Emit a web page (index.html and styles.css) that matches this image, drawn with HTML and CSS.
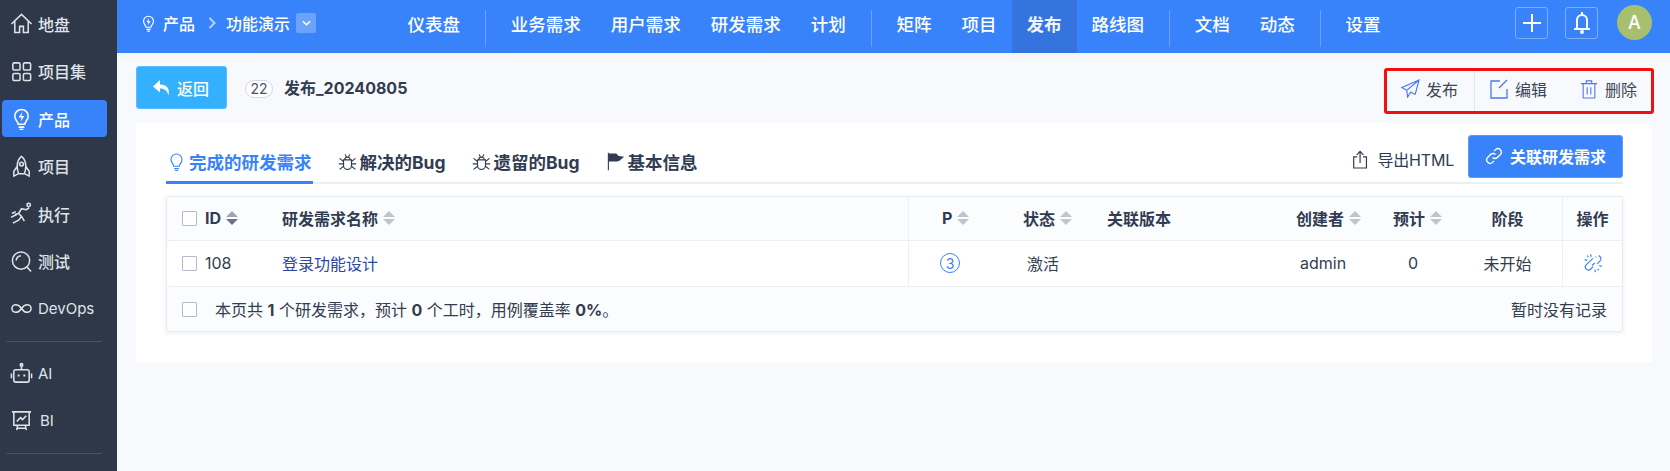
FILE: index.html
```html
<!DOCTYPE html>
<html lang="zh-CN">
<head>
<meta charset="utf-8">
<title>发布详情</title>
<link rel="stylesheet" href="styles.css">
</head>
<body>
<div class="app">
  <aside class="sidebar">
    <a class="side-item"><svg class="side-icon" viewBox="0 0 24 24"><path d="M1.500 12.500 12 2.500l10.500 10M5 10v11.500h5v-6.500h4v6.500h5V10"/></svg><span>地盘</span></a>
    <a class="side-item"><svg class="side-icon" viewBox="0 0 24 24"><rect x="3" y="3" width="7.500" height="7.500" rx="1.500"/><rect x="14" y="3" width="7.500" height="7.500" rx="1.500"/><rect x="3" y="14" width="7.500" height="7.500" rx="1.500"/><rect x="14" y="14" width="7.500" height="7.500" rx="1.500"/></svg><span>项目集</span></a>
    <a class="side-item active"><svg class="side-icon" viewBox="0 0 24 24"><path d="M8.500 18c0-3-3.500-4-3.500-8.500a7 7 0 0 1 14 0C19 14 15.500 15 15.500 18zM9 21h6M10 23.500h4"/><path class="fill" d="M13 5l-4 6h3l-1 4.500 4-6h-3z"/></svg><span>产品</span></a>
    <a class="side-item"><svg class="side-icon" viewBox="0 0 24 24"><path d="M12 1.500c3.500 3 4.500 6.500 4.500 10 0 3-.5 5.500-1.500 8H9c-1-2.500-1.500-5-1.500-8 0-3.500 1-7 4.500-10zM7.500 12 4 17v5l5-2.500M16.500 12l3.500 5v5l-5-2.500"/><circle cx="12" cy="9.500" r="2"/></svg><span>项目</span></a>
    <a class="side-item"><svg class="side-icon" viewBox="0 0 24 24"><path d="M3 22l6-3 3-4-3-3 3-5 5 1 3-2M9 12l-4 1M12 15l3 5"/><circle cx="19.500" cy="3" r="1.800"/><path d="M1 16l6-3M2 12l4-2"/></svg><span>执行</span></a>
    <a class="side-item"><svg class="side-icon" viewBox="0 0 24 24"><circle cx="11.500" cy="11" r="9"/><path d="M17.500 17.500l4.500 5M6.500 11a5 5 0 0 1 5-5"/></svg><span>测试</span></a>
    <a class="side-item latin"><svg class="side-icon" viewBox="0 0 24 24"><path d="M12 12c-2-3-4-4-6-4a4 4 0 0 0 0 8c2 0 4-1 6-4s4-4 6-4a4 4 0 0 1 0 8c-2 0-4-1-6-4z"/></svg><span>DevOps</span></a>
    <div class="side-line"></div>
    <a class="side-item latin"><svg class="side-icon" viewBox="0 0 24 24"><rect x="4" y="8" width="16" height="13" rx="2"/><path d="M12 8V4M1.500 12v5M22.500 12v5"/><circle cx="12" cy="3" r="1.300"/><path class="fill" d="M8 13h2v2H8zM14 13h2v2h-2z"/></svg><span>AI</span></a>
    <a class="side-item latin"><svg class="side-icon" viewBox="0 0 24 24"><path d="M2 3h20M4 3v14h16V3M8 17l-1 5M16 17l1 5M7 20h10M7 13l4-4 2 2 4-4"/></svg><span class="bi">BI</span></a>
    <div class="side-line"></div>
  </aside>
  <div class="content">
    <header class="topbar">
      <div class="crumbs">
        <svg class="crumb-icon" viewBox="0 0 24 24"><path d="M8.500 18c0-3-3.500-4-3.500-8.500a7 7 0 0 1 14 0C19 14 15.500 15 15.500 18zM9 21h6M10 23.500h4"/><path class="fill" d="M13 5l-4 6h3l-1 4.500 4-6h-3z"/></svg>
        <span>产品</span>
        <svg class="crumb-arrow" viewBox="0 0 8 12"><path d="M1.500 1 6.500 6l-5 5"/></svg>
        <span>功能演示</span>
        <span class="crumb-drop"><svg viewBox="0 0 12 8"><path d="M2 2l4 4 4-4"/></svg></span>
      </div>
      <nav class="nav">
        <a class="nav-item">仪表盘</a><i class="nav-line"></i>
        <a class="nav-item">业务需求</a><a class="nav-item">用户需求</a><a class="nav-item">研发需求</a><a class="nav-item">计划</a><i class="nav-line"></i>
        <a class="nav-item">矩阵</a><a class="nav-item">项目</a><a class="nav-item current">发布</a><a class="nav-item">路线图</a><i class="nav-line"></i>
        <a class="nav-item">文档</a><a class="nav-item">动态</a><i class="nav-line"></i>
        <a class="nav-item">设置</a>
      </nav>
      <div class="top-actions">
        <span class="top-btn"><svg viewBox="0 0 20 20"><path d="M10 1v18M1 10h18"/></svg></span>
        <span class="top-btn"><svg viewBox="0 0 20 24"><path d="M5 18V9a5 5 0 0 1 10 0v9zM2 18h16M10 1v3"/><circle class="fillw" cx="10" cy="21" r="2"/></svg></span>
        <span class="avatar">A</span>
      </div>
    </header>
    <main class="main">
      <div class="page-head">
        <button class="back"><svg viewBox="0 0 18 16"><path class="fillw" d="M7 0 0 6.500 7 12.500V8.500c4 0 7 1.500 8.500 7 1.500-7-1.500-11-8.500-11z"/></svg>返回</button>
        <span class="badge">22</span>
        <strong class="title">发布_20240805</strong>
        <div class="toolbar">
          <a class="tool tool-first"><svg viewBox="0 0 20 20"><path d="M19 1 1 9l5 3zM19 1 6 12l1 7 3-5 5 2z"/></svg>发布</a>
          <a class="tool tool-mid"><svg viewBox="0 0 20 20"><path d="M11 2H2v17h16v-9M18 1l-8 8"/></svg>编辑</a>
          <a class="tool tool-last"><svg viewBox="0 0 20 22"><path d="M1 5h18M7 5V2h6v3M3.500 5v16h13V5M8 9v8M12 9v8"/></svg>删除</a>
        </div>
      </div>
      <section class="panel">
        <div class="tabs">
          <a class="tab on"><svg class="tab-icon" viewBox="0 0 24 24"><path d="M8.500 18c0-3-3.500-4-3.500-8.500a7 7 0 0 1 14 0C19 14 15.500 15 15.500 18zM9 21h6M10 23.500h4"/></svg>完成的研发需求</a>
          <a class="tab"><svg class="tab-icon" viewBox="0 0 24 24"><path d="M7 10h10v7a5 5 0 0 1-10 0zM8.500 10a3.500 3.500 0 0 1 7 0M2 8l5 4M22 8l-5 4M1 15h6M23 15h-6M2 22l5-4M22 22l-5-4M9 3l1.500 3M15 3l-1.500 3"/></svg>解决的Bug</a>
          <a class="tab"><svg class="tab-icon" viewBox="0 0 24 24"><path d="M7 10h10v7a5 5 0 0 1-10 0zM8.500 10a3.500 3.500 0 0 1 7 0M2 8l5 4M22 8l-5 4M1 15h6M23 15h-6M2 22l5-4M22 22l-5-4M9 3l1.500 3M15 3l-1.500 3"/></svg>遗留的Bug</a>
          <a class="tab"><svg class="tab-icon flag" viewBox="0 0 24 24"><path d="M3 1v22"/><path class="filld" d="M3 2h10l3 3 7 1-6 5-3 1H3z"/></svg>基本信息</a>
          <a class="export"><svg viewBox="0 0 20 22"><path d="M6 8H2v13h15V8h-4M9.500 15V2M5.500 5.500 9.500 1.500l4 4"/></svg>导出HTML</a>
          <button class="link-btn"><svg viewBox="0 0 24 24"><path d="M10 14a4.500 4.500 0 0 0 6.500 0l4-4a4.600 4.600 0 0 0-6.500-6.500l-2 2M14 10a4.500 4.500 0 0 0-6.500 0l-4 4a4.600 4.600 0 0 0 6.500 6.500l2-2"/></svg>关联研发需求</button>
        </div>
        <div class="table">
          <div class="row head">
            <div class="cell first"><i class="check"></i>ID<i class="sort dark"></i></div>
            <div class="cell name">研发需求名称<i class="sort"></i></div>
            <div class="cell pri ln">P<i class="sort"></i></div>
            <div class="cell st">状态<i class="sort"></i></div>
            <div class="cell">关联版本</div>
            <div class="cell cr">创建者<i class="sort"></i></div>
            <div class="cell es">预计<i class="sort"></i></div>
            <div class="cell ctr stage">阶段</div>
            <div class="cell ctr rn">操作</div>
          </div>
          <div class="row">
            <div class="cell first"><i class="check"></i>108</div>
            <div class="cell name"><a class="story">登录功能设计</a></div>
            <div class="cell pri2 ln"><span class="pri-dot">3</span></div>
            <div class="cell st2">激活</div>
            <div class="cell"></div>
            <div class="cell cr2">admin</div>
            <div class="cell es2">0</div>
            <div class="cell ctr stage">未开始</div>
            <div class="cell ctr rn"><svg class="unlink" viewBox="0 0 24 24"><path d="M16 4.500l-1 .8M19 3l1.500 1.500a3.500 3.500 0 0 1 0 5L17 13M12 6.500 4 14a3.500 3.500 0 0 0 5 5.500l3-3M14 12l-3 3M9 1.500l.8 3M2 8l3 .8M15 23l-.8-3M22.500 16l-3-.8M5 3l1.500 2M19 21l-1.500-2"/></svg></div>
          </div>
          <div class="foot">
            <i class="check"></i>
            <span class="summary">本页共 <b>1</b> 个研发需求，预计 <b>0</b> 个工时，用例覆盖率 <b>0%</b>。</span>
            <span class="empty">暂时没有记录</span>
          </div>
        </div>
      </section>
    </main>
  </div>
</div>
</body>
</html>
```

FILE: styles.css
```css
* { box-sizing: border-box; }
html, body { margin: 0; height: 100%; overflow: hidden; }
body {
  font-family: Inter, "Noto Sans CJK SC", sans-serif;
  font-size: 16px;
  color: #313c52;
  background: #f7f9fc;
}
i { font-style: normal; }
svg { fill: none; stroke: currentColor; stroke-width: 1.6; flex: none; display: block; }
svg .fill { fill: currentColor; stroke: none; }
svg .fillw { fill: #fff; stroke: none; }
svg .filld { fill: #313c52; stroke: none; }

.app { display: flex; height: 471px; }

/* sidebar */
.sidebar {
  width: 117px;
  flex: none;
  background: #2e3849;
  padding: 0 10px 0 2px;
  color: #dfe3e8;
}
.side-item {
  display: flex;
  align-items: center;
  gap: 5px;
  height: 37px;
  margin-bottom: 10.5px;
  padding-left: 8px;
  border-radius: 4px;
  font-size: 16px;
  font-weight: 500;
}
.side-item:first-child { margin-top: 5px; }
.side-item.latin { font-weight: 400; font-size: 15px; margin-bottom: 9.5px; }
.side-item.active { background: #3883fa; color: #fff; }
.side-icon { width: 23px; height: 23px; stroke-width: 1.6; }
.side-item .bi { margin-left: 2px; }
.side-line { height: 1px; background: #485365; margin: 0 0 13px 5px; width: 95px; }
.side-item.latin:has(+ .side-line) { margin-bottom: 14px; }

/* top bar */
.content { flex: 1; min-width: 0; display: flex; flex-direction: column; }
.topbar {
  display: flex;
  height: 53px;
  flex: none;
  background: #3883fa;
  color: #fff;
}
.crumbs {
  display: flex;
  align-items: center;
  height: 46px;
  padding-left: 23px;
  width: 275px;
  flex: none;
  font-size: 16px;
  font-weight: 500;
}
.crumb-icon { width: 17px; height: 20px; margin-right: 6px; }
.crumb-arrow { width: 8px; height: 12px; margin: 0 10px 0 13px; color: #b6d0fb; stroke-width: 2; }
.crumb-drop {
  width: 20px; height: 20px; margin-left: 6px;
  border-radius: 2px;
  background: #6ba3fb;
  display: flex; align-items: center; justify-content: center;
}
.crumb-drop svg { width: 11px; height: 8px; }
.nav { display: flex; align-items: stretch; height: 53px; margin-left: .5px; }
.nav-item {
  display: flex; align-items: center;
  padding: 0 15px 7px;
  font-size: 17.5px;
  font-weight: 500;
  white-space: nowrap;
}
.nav-item.current { background: #3574de; font-weight: 700; color: #eef3fc; }
.nav-line { width: 1px; height: 37px; margin: 10px 10px 0 9.75px; background: #6aa2fb; }
.top-actions {
  margin-left: auto;
  display: flex; align-items: flex-start;
  padding: 5px 18px 0 0;
  gap: 17px;
}
.top-btn {
  width: 33px; height: 32px; margin-top: 2px;
  border: 1px solid #7eaefb;
  border-radius: 3px;
  display: flex; align-items: center; justify-content: center;
}
.top-btn svg { width: 20px; height: 24px; stroke-width: 2; }
.avatar {
  width: 35px; height: 35px; border-radius: 50%;
  background: #a8bf70;
  color: #fff;
  display: flex; align-items: center; justify-content: center;
  font-size: 18px; font-weight: 500;
  margin-left: 2px;
}

/* main */
.main { flex: 1; padding: 13px 18px 0 19px; background: linear-gradient(#f3f4f6, #f7f9fc 6px); }
.page-head { display: flex; align-items: flex-start; height: 48px; }
.back {
  width: 91px; height: 43px;
  border: 1px solid #58bfff;
  border-radius: 3px;
  background: #33b1ff;
  color: #fff;
  font: 500 16px Inter, "Noto Sans CJK SC", sans-serif;
  display: flex; align-items: center; justify-content: center; gap: 6px;
  padding-right: 7px;
}
.back svg { width: 18px; height: 16px; }
.badge {
  width: 28px; height: 18px; margin: 14px 0 0 18px;
  border: 1px solid #d5d9e4;
  border-radius: 9px;
  background: #fff;
  font-size: 14px; line-height: 16px; text-align: center;
  color: #4a5468;
}
.title { margin: 9px 0 0 11px; font-size: 16px; font-weight: 700; }
.toolbar {
  margin: 2px -2px 0 auto;
  width: 270px; height: 46px;
  border: 3px solid #f01010;
  border-radius: 3px;
  display: flex; align-items: center;
  color: #3c465a;
}
.tool { display: flex; align-items: center; height: 100%; padding-bottom: 5px; }
.tool svg { width: 19px; height: 19px; color: #4a78f0; stroke-width: 1.2; margin-right: 7px; }
.tool-first { padding-left: 14px; width: 88px; border-right: 1px solid #e4e7ee; }
.tool-first svg { margin-right: 6px; }
.tool-mid { padding-left: 14px; width: 90px; }
.tool-mid svg { width: 20px; height: 20px; margin-right: 6px; stroke-width: 1.3; }
.tool-last { padding-left: 15px; }
.tool-last svg { width: 18px; height: 20px; margin-right: 7px; }

.panel { margin-top: 9px; height: 239px; background: #fff; padding: 12px 29px 0 30px; }
.tabs {
  display: flex; align-items: center;
  height: 49px;
  border-bottom: 2px solid #eceff5;
}
.tab {
  display: flex; align-items: center;
  height: 49px;
  margin-bottom: -2px;
  margin-right: 26px;
  padding-top: 7px;
  font-size: 17.5px;
  font-weight: 700;
  border-bottom: 3px solid transparent;
  white-space: nowrap;
}
.tab.on { color: #3883fa; border-bottom-color: #3883fa; margin-right: 25px; padding-left: 1px; padding-right: 1px; }
.tab-icon { width: 19px; height: 19px; margin-right: 3px; stroke-width: 1.4; }
.tab-icon.flag { width: 19px; height: 19px; }
.export { margin-left: auto; display: flex; align-items: center; gap: 8px; white-space: nowrap; margin-top: 1px; letter-spacing: -.2px; }
.export svg { width: 17px; height: 19px; stroke-width: 1.4; }
.link-btn {
  margin: -5px 0 0 14px;
  width: 155px; height: 43px;
  border: 1px solid #5b99fb;
  border-radius: 3px;
  background: #3883fa;
  color: #fff;
  font: 700 16px Inter, "Noto Sans CJK SC", sans-serif;
  display: flex; align-items: center; justify-content: center; gap: 7px;
  flex: none;
}
.link-btn svg { width: 18px; height: 18px; stroke-width: 1.8; }

/* table */
.table {
  margin-top: 12px;
  height: 136px;
  border: 1px solid #e9ecf2;
  border-radius: 3px;
  background: #fbfcfe;
  box-shadow: 0 1px 4px rgba(40, 60, 100, .1);
}
.row {
  display: grid;
  grid-template-columns: 115px 626px 106px 93px 173px 100px 90px 92px 1fr;
  height: 46px;
  border-bottom: 1px solid #eceff4;
  align-items: stretch;
  background: #fff;
}
.row.head { height: 44px; font-weight: 700; background: #fbfcfe; }
.cell { display: flex; align-items: center; white-space: nowrap; color: #333d50; padding-bottom: 1px; }
.head .cell { color: #313c52; }
.first { padding-left: 15px; }
.check {
  width: 15px; height: 15px; flex: none;
  border: 1px solid #b5bac8;
  background: #fff;
  border-radius: 1px;
  margin-right: 8px;
}
.sort { display: inline-block; position: relative; width: 12px; height: 16px; margin-left: 5px; flex: none; }
.sort::before, .sort::after {
  content: ""; position: absolute; left: 0;
  border-left: 6px solid transparent; border-right: 6px solid transparent;
}
.sort::before { top: 1px; border-bottom: 6px solid #c1c4cc; }
.sort::after { bottom: 1px; border-top: 6px solid #c1c4cc; }
.sort.dark::before { border-bottom-color: #a2a6b0; }
.sort.dark::after { border-top-color: #6c7280; }
.ln { border-left: 1px solid #eceff4; }
.rn { border-left: 1px solid #eceff4; }
.pri { padding-left: 33px; }
.pri2 { padding-left: 31px; }
.pri-dot {
  width: 20px; height: 20px; border-radius: 50%;
  border: 1px solid #3883fa; color: #3883fa;
  display: flex; align-items: center; justify-content: center;
  font-size: 14px;
}
.st { padding-left: 9px; }
.st2 { padding-left: 13px; }
.cr { padding-left: 16px; }
.cr2 { padding-left: 20px; }
.es { padding-left: 13px; }
.es2 { padding-left: 28px; }
.ctr { justify-content: center; }
.stage { padding-right: 17px; }
.story { color: #2d45a3; }
.unlink { width: 20px; height: 20px; color: #3883fa; stroke-width: 1.4; }
.foot { display: flex; align-items: center; height: 44px; padding: 0 15px; }
.foot .check { margin-right: 18px; }
.summary { color: #333d50; }
.summary b { font-weight: 700; }
.empty { margin-left: auto; color: #333d50; }
```
